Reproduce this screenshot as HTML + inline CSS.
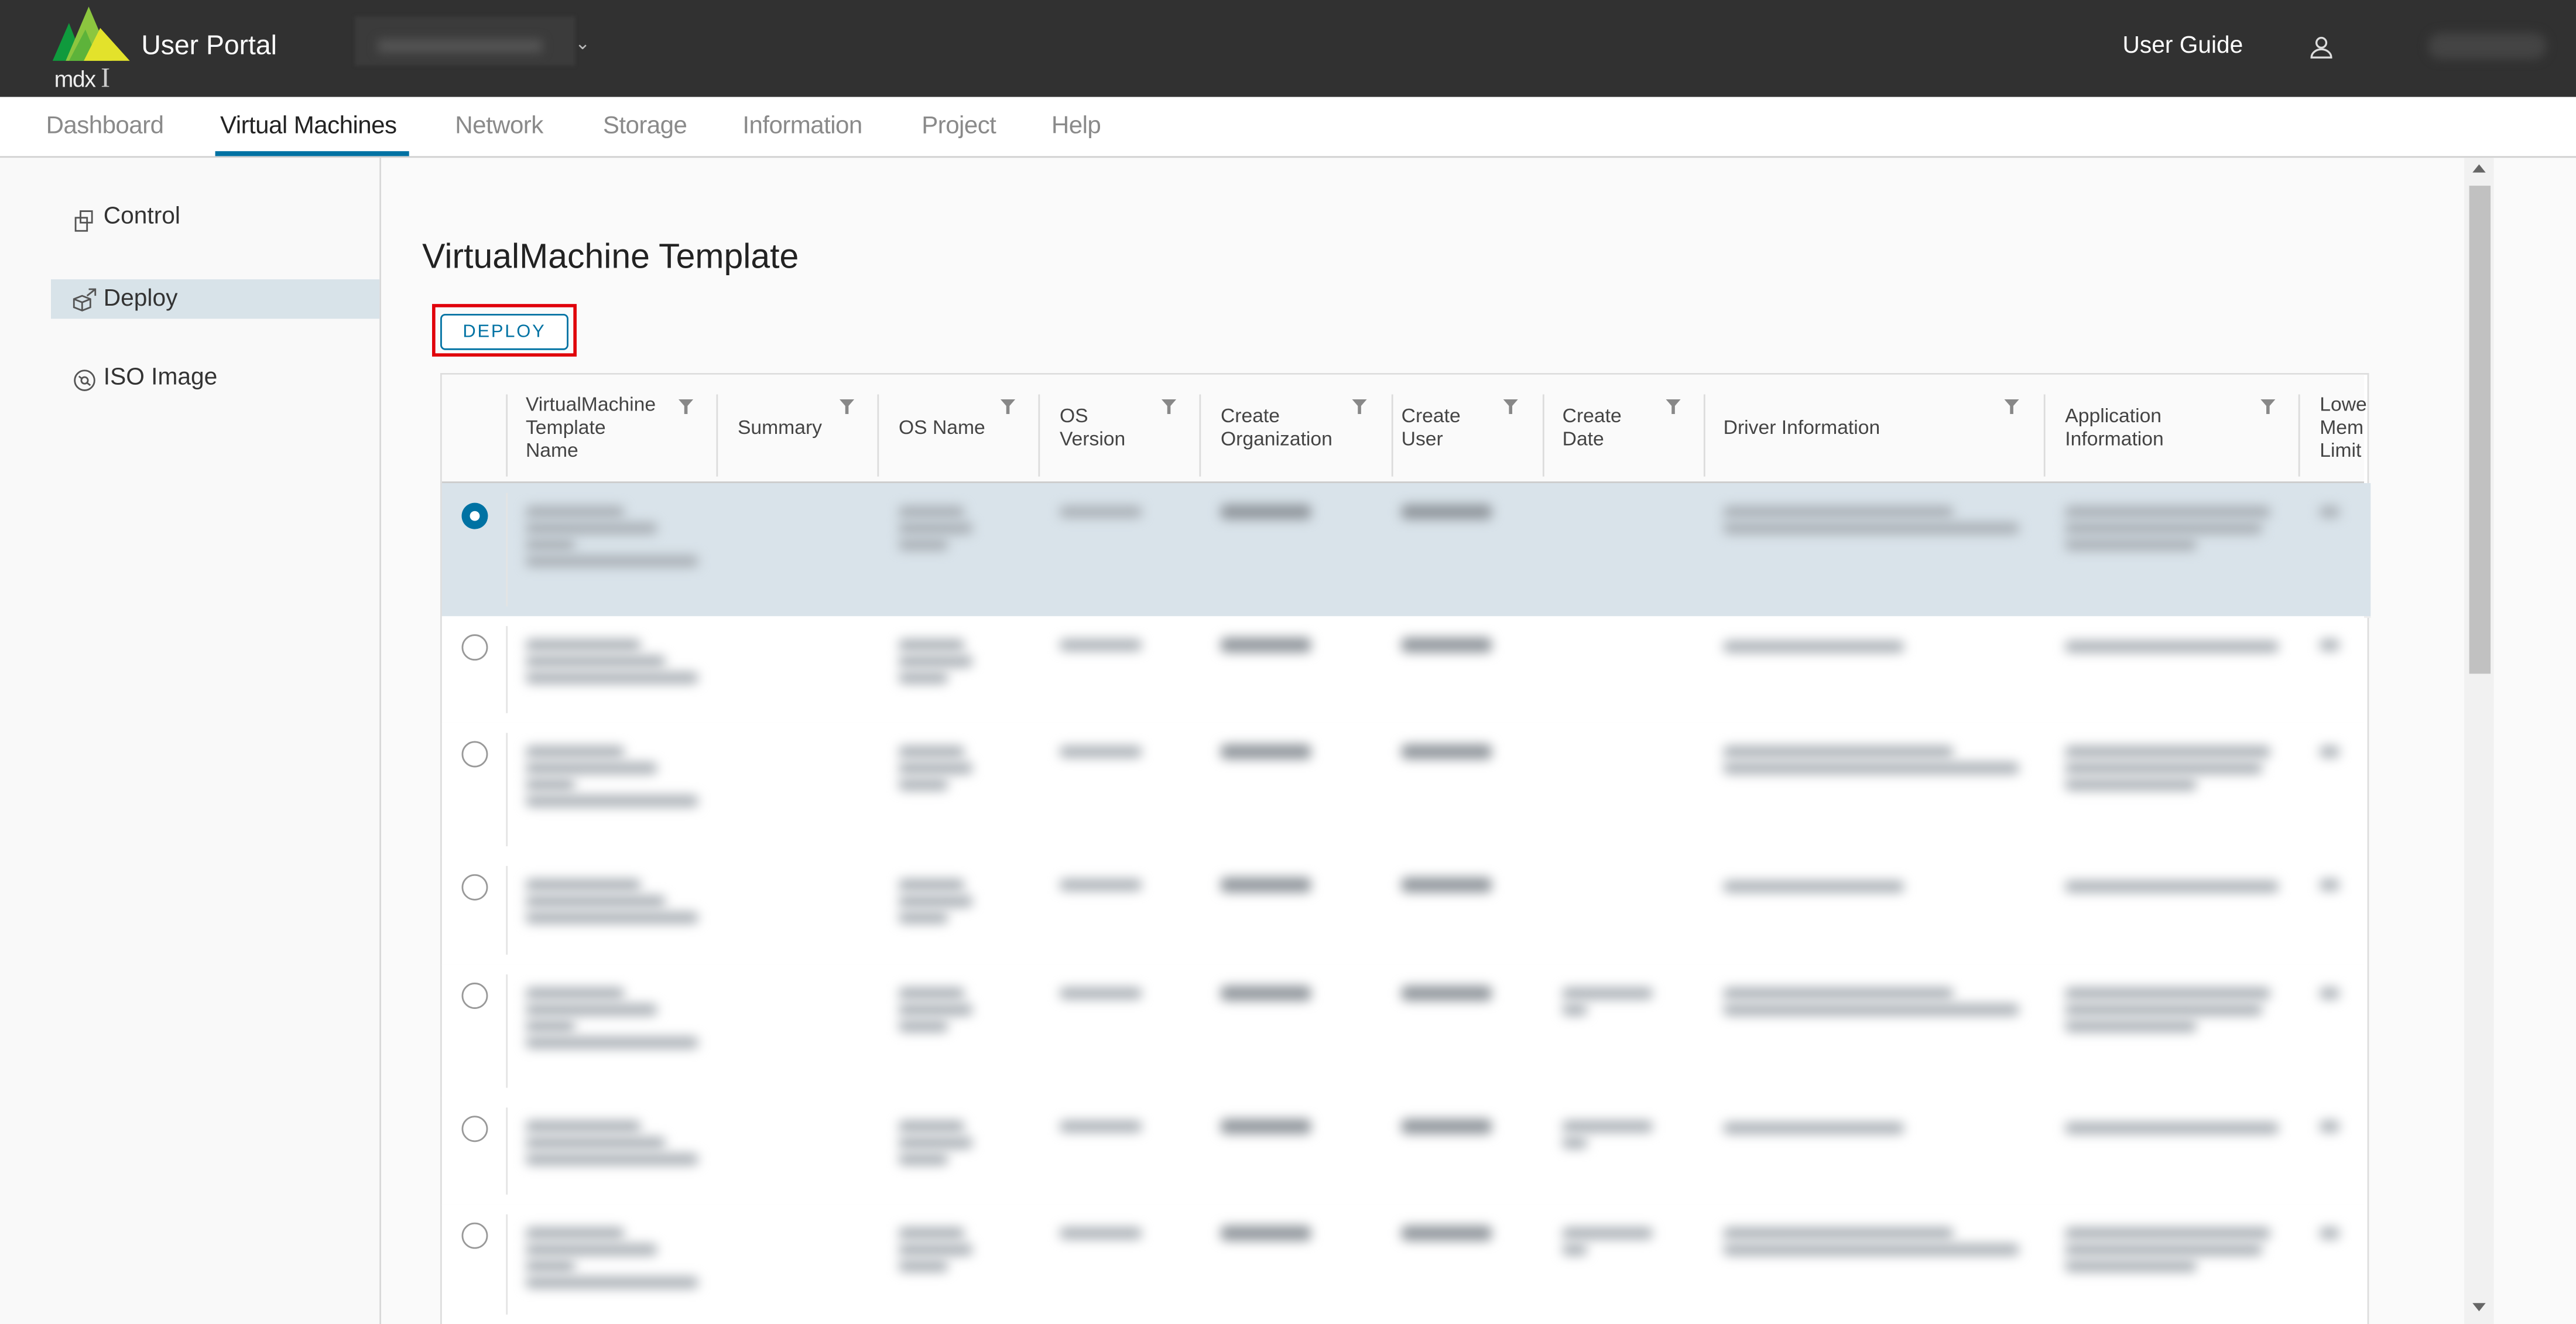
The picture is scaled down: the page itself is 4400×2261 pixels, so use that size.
<!DOCTYPE html>
<html><head><meta charset="utf-8">
<style>
html,body{margin:0;padding:0;width:4400px;height:2261px;overflow:hidden;background:#fafafa}
#w{width:1568px;height:806px;transform:scale(2.80612);transform-origin:0 0;position:relative;font-family:"Liberation Sans",sans-serif;background:#fafafa;overflow:hidden}
.a{position:absolute}
.hd{left:0;top:0;width:1568px;height:59px;background:#313131}
.nav{left:0;top:59px;width:1568px;height:36px;background:#fff;border-bottom:1px solid #d0d0d0}
.tab{top:68px;font-size:15px;color:#8a8a8a;letter-spacing:-0.2px}
.side{left:0;top:96px;width:231px;height:710px;background:#f9f9f9;border-right:1px solid #d8d8d8}
.si{font-size:14.5px;color:#333;left:63px}
.th{font-size:12px;color:#444;line-height:14px;top:0}
.vl{position:absolute;top:12px;width:1px;height:50px;background:#dcdcdc}
.fl{position:absolute;width:9px;height:9px}
.b{position:absolute;background:#a8aeb4;filter:blur(3.5px);height:7px;border-radius:3px}
.rad{position:absolute;left:281px;width:14px;height:14px;border:1px solid #999;border-radius:50%;background:#fff}
</style></head><body><div id="w">
<div class="a hd"></div>
<svg class="a" style="left:32px;top:4px" width="48" height="34" viewBox="0 0 48 34">
<polygon points="0,33 10,10 19,33" fill="#0f9a3d"/>
<polygon points="8,33 22,0 36,33" fill="#8cc63f"/>
<polygon points="10,33 20,14 28,33" fill="#5db33a"/>
<polygon points="19,33 29,13 47,33" fill="#e3e22b"/>
</svg>
<div class="a" style="left:33px;top:38px;color:#eee;font-size:14px;letter-spacing:-0.5px">mdx <span style="font-family:'Liberation Serif',serif;font-size:17px;color:#ccc">I</span></div>
<div class="a" style="left:86px;top:19px;color:#fff;font-size:16.5px">User Portal</div>
<div class="a" style="left:216px;top:10px;width:134px;height:30px;background:#3b3b3b;filter:blur(1px)"></div>
<div class="a" style="left:230px;top:24px;width:100px;height:8px;background:#555;filter:blur(3px)"></div>
<div class="a" style="left:350px;top:20px;color:#bbb;font-size:11px">&#8964;</div>
<div class="a" style="left:1292px;top:20px;color:#fff;font-size:14.5px">User Guide</div>
<svg class="a" style="left:1405px;top:21px" width="16" height="16" viewBox="0 0 16 16"><circle cx="8" cy="5" r="3" fill="none" stroke="#ddd" stroke-width="1.2"/><path d="M2 14c0-3 3-5 6-5s6 2 6 5z" fill="none" stroke="#ddd" stroke-width="1.2"/></svg>
<div class="a" style="left:1478px;top:20px;width:72px;height:16px;background:#444;filter:blur(3px);border-radius:8px"></div>
<div class="a nav"></div>
<div class="a tab" style="left:28px">Dashboard</div>
<div class="a tab" style="left:134px;color:#222">Virtual Machines</div>
<div class="a" style="left:131px;top:92px;width:118px;height:3px;background:#0072a3"></div>
<div class="a tab" style="left:277px">Network</div>
<div class="a tab" style="left:367px">Storage</div>
<div class="a tab" style="left:452px">Information</div>
<div class="a tab" style="left:561px">Project</div>
<div class="a tab" style="left:640px">Help</div>
<div class="a side"></div>
<div class="a" style="left:31px;top:170px;width:200px;height:24px;background:#d8e3e9"></div>
<div class="a si" style="top:124px">Control</div>
<div class="a si" style="top:174px">Deploy</div>
<div class="a si" style="top:222px">ISO Image</div>
<svg class="a" style="left:44px;top:127px" width="15" height="15" viewBox="0 0 15 15" fill="none" stroke="#555"><rect x="5" y="1.5" width="7" height="7"/><rect x="2" y="5.5" width="7" height="8"/></svg>
<svg class="a" style="left:44px;top:175px" width="15" height="15" viewBox="0 0 15 15" fill="none" stroke="#555"><path d="M1 7l5-2 5 2v5l-5 2-5-2z M1 7l5 2 5-2 M6 9v5 M9 5l5-4 M10 1h4v4"/></svg>
<svg class="a" style="left:44px;top:224px" width="15" height="15" viewBox="0 0 15 15" fill="none" stroke="#555"><circle cx="7.5" cy="7.5" r="6"/><circle cx="7.5" cy="7.5" r="2"/><path d="M4 5l2 1.5M9 9l2 1.5"/></svg>
<div class="a" style="left:257px;top:145px;font-size:21px;color:#222">VirtualMachine Template</div>
<div class="a" style="left:263px;top:185px;width:84px;height:28px;border:2px solid #e0000a"></div>
<div class="a" style="left:268px;top:191px;width:76px;height:20px;border:1px solid #0072a3;border-radius:3px;background:#fff;color:#0072a3;font-size:11px;letter-spacing:1px;text-align:center;line-height:20px">DEPLOY</div>
<div class="a" style="left:268px;top:227px;width:1172px;height:579px;background:#fff;border:1px solid #ddd;border-bottom:none"></div>
<div class="a" style="left:269px;top:228px;width:1170px;height:65px;background:#fafafa;border-bottom:1px solid #ccc" id="hdr">
<div class="vl" style="left:39px"></div><div class="vl" style="left:167px"></div><div class="vl" style="left:265px"></div><div class="vl" style="left:363px"></div><div class="vl" style="left:461px"></div><div class="vl" style="left:578px"></div><div class="vl" style="left:670px"></div><div class="vl" style="left:768px"></div><div class="vl" style="left:975px"></div><div class="vl" style="left:1130px"></div>
<div class="a th" style="left:51px;top:11px">VirtualMachine<br>Template<br>Name</div>
<div class="a th" style="left:180px;top:25px">Summary</div>
<div class="a th" style="left:278px;top:25px">OS Name</div>
<div class="a th" style="left:376px;top:18px">OS<br>Version</div>
<div class="a th" style="left:474px;top:18px">Create<br>Organization</div>
<div class="a th" style="left:584px;top:18px">Create<br>User</div>
<div class="a th" style="left:682px;top:18px">Create<br>Date</div>
<div class="a th" style="left:780px;top:25px">Driver Information</div>
<div class="a th" style="left:988px;top:18px">Application<br>Information</div>
<div class="a th" style="left:1143px;top:11px">Lowe<br>Mem<br>Limit</div>
<div id="fls"></div>
</div>
<div id="rows"></div>
<div class="a" style="left:1500px;top:96px;width:18px;height:710px;background:#f1f1f1"></div>
<div class="a" style="left:1503px;top:113px;width:13px;height:297px;background:#c1c1c1"></div>
<div class="a" style="left:1505px;top:100px;width:0;height:0;border-left:4px solid transparent;border-right:4px solid transparent;border-bottom:5px solid #666"></div>
<div class="a" style="left:1505px;top:793px;width:0;height:0;border-left:4px solid transparent;border-right:4px solid transparent;border-top:5px solid #666"></div>
<script>
var f='';[144,242,340,438,554,646,745,951,1107].forEach(function(x){f+='<svg class="fl" style="left:'+x+'px;top:15px" viewBox="0 0 9 9"><path d="M0 0h9L5.5 4v5h-2V4z" fill="#888"/></svg>';});
document.getElementById('fls').outerHTML=f;
var R=[[294,81,1],[375,65,0],[440,81,0],[521,66,0],[587,81,0],[668,65,0],[733,73,0]];
var h='';
R.forEach(function(r,i){
 var y=r[0],H=r[1];
 h+='<div class="a" style="left:269px;top:'+y+'px;width:'+(r[2]?1174:1170)+'px;height:'+H+'px;background:'+(r[2]?'#d9e3ea':'#fff')+';border-bottom:1px solid #eee"></div>';
 h+='<div class="a" style="left:308px;top:'+(y+6)+'px;width:1px;height:'+(H-12)+'px;background:#e4e4e4"></div>';
 h+=r[2]?'<div class="a" style="left:281px;top:'+(y+12)+'px;width:16px;height:16px;border-radius:50%;background:#0072a3"><div class="a" style="left:5px;top:5px;width:6px;height:6px;border-radius:50%;background:#fff"></div></div>':'<div class="rad" style="top:'+(y+11)+'px"></div>';
 var tall=(H>70);
 var L=tall?[[320,60],[320,80],[320,30],[320,105]]:[[320,70],[320,85],[320,105]];
 L.forEach(function(l,k){h+='<div class="b" style="left:'+l[0]+'px;top:'+(y+14+k*10)+'px;width:'+l[1]+'px"></div>';});
 h+='<div class="b" style="left:547px;top:'+(y+14)+'px;width:40px"></div><div class="b" style="left:547px;top:'+(y+24)+'px;width:45px"></div><div class="b" style="left:547px;top:'+(y+34)+'px;width:30px"></div>';
 h+='<div class="b" style="left:645px;top:'+(y+14)+'px;width:50px"></div>';
 h+='<div class="b" style="left:743px;top:'+(y+13)+'px;width:55px;height:9px;background:#8f959b"></div>';
 h+='<div class="b" style="left:853px;top:'+(y+13)+'px;width:55px;height:9px;background:#8f959b"></div>';
 if(i>=4){h+='<div class="b" style="left:951px;top:'+(y+14)+'px;width:55px"></div><div class="b" style="left:951px;top:'+(y+24)+'px;width:15px"></div>';}
 if(tall){h+='<div class="b" style="left:1049px;top:'+(y+14)+'px;width:140px"></div><div class="b" style="left:1049px;top:'+(y+24)+'px;width:180px"></div>';
  h+='<div class="b" style="left:1257px;top:'+(y+14)+'px;width:125px"></div><div class="b" style="left:1257px;top:'+(y+24)+'px;width:120px"></div><div class="b" style="left:1257px;top:'+(y+34)+'px;width:80px"></div>';}
 else{h+='<div class="b" style="left:1049px;top:'+(y+15)+'px;width:110px"></div><div class="b" style="left:1257px;top:'+(y+15)+'px;width:130px"></div>';}
 h+='<div class="b" style="left:1412px;top:'+(y+14)+'px;width:12px"></div>';
});
document.getElementById('rows').outerHTML=h;
</script>
</div></body></html>
